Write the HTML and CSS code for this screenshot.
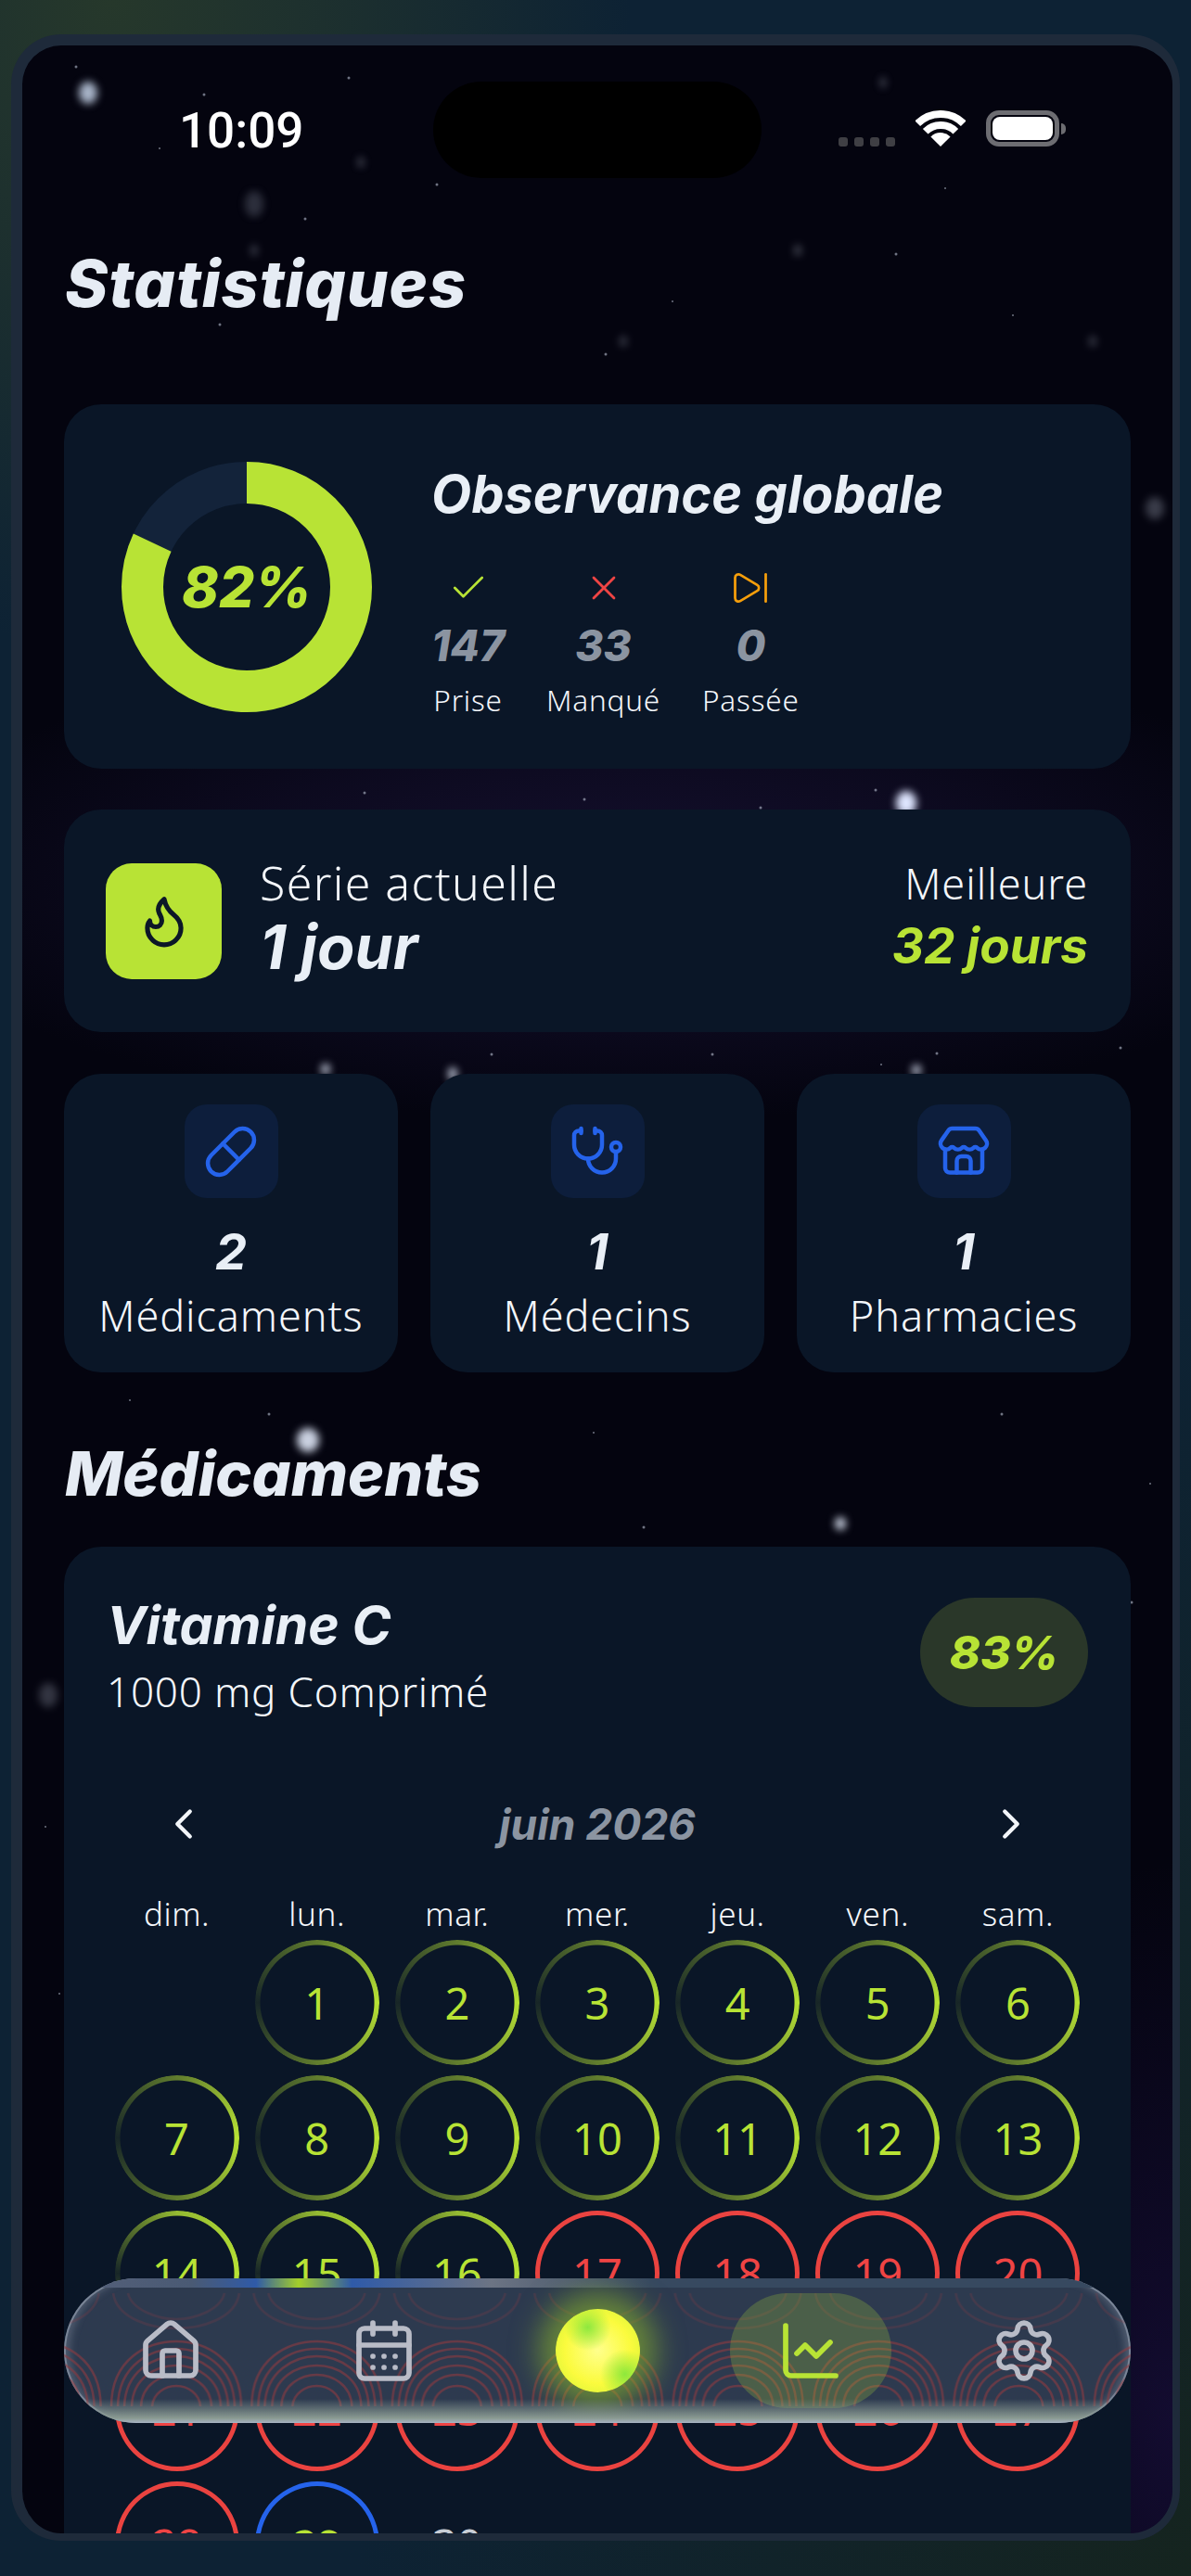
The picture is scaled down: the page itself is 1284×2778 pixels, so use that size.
FILE: index.html
```html
<!DOCTYPE html>
<html lang="fr">
<head>
<meta charset="utf-8">
<title>Statistiques</title>
<link rel="stylesheet" href="styles.css">
</head>
<body>
<div class="phone">
  <svg class="sky" viewBox="24 49 1240 2683" aria-hidden="true">
    <g class="soft">
      <ellipse cx="95" cy="100" rx="10" ry="12" fill="#a8b4c8"/>
      <ellipse cx="977" cy="866" rx="11" ry="13" fill="#dfe6ff"/>
      <ellipse cx="332" cy="1553" rx="12" ry="13" fill="#c9d0e0"/>
      <ellipse cx="906" cy="1643" rx="6" ry="7" fill="#c9d0e0"/>
      <ellipse cx="351" cy="1153" rx="5" ry="6" fill="#b8bfd0"/>
      <ellipse cx="488" cy="1158" rx="5" ry="7" fill="#b8bfd0"/>
      <ellipse cx="988" cy="1154" rx="5" ry="6" fill="#b8bfd0"/>
    </g>
    <g class="soft faint">
      <ellipse cx="952" cy="89" rx="4" ry="6" fill="#8a90a0"/>
      <ellipse cx="389" cy="175" rx="4" ry="6" fill="#8a90a0"/>
      <ellipse cx="274" cy="220" rx="10" ry="14" fill="#6a7080"/>
      <ellipse cx="274" cy="270" rx="4" ry="6" fill="#8a90a0"/>
      <ellipse cx="860" cy="270" rx="4" ry="6" fill="#a0a6b4"/>
      <ellipse cx="672" cy="368" rx="4" ry="6" fill="#8a90a0"/>
      <ellipse cx="1178" cy="368" rx="4" ry="6" fill="#8a90a0"/>
      <ellipse cx="1245" cy="548" rx="10" ry="12" fill="#8a90a0"/>
      <ellipse cx="52" cy="1828" rx="10" ry="13" fill="#7a7f8e"/>
    </g>
    <g class="tiny" fill="#b8bfd0">
      <circle cx="82" cy="72" r="1.5"/><circle cx="376" cy="84" r="1.5"/><circle cx="220" cy="102" r="1.5"/>
      <circle cx="471" cy="199" r="1.5"/><circle cx="329" cy="236" r="1.5"/><circle cx="966" cy="274" r="1.5"/>
      <circle cx="237" cy="350" r="1.5"/><circle cx="653" cy="382" r="1.5"/><circle cx="1019" cy="203" r="1"/>
      <circle cx="725" cy="325" r="1"/><circle cx="1092" cy="340" r="1"/><circle cx="172" cy="160" r="1"/>
      <circle cx="393" cy="855" r="1.5"/><circle cx="630" cy="862" r="1.5"/><circle cx="820" cy="871" r="1.5"/>
      <circle cx="944" cy="852" r="1.5"/><circle cx="530" cy="1137" r="1.5"/><circle cx="768" cy="1137" r="1.5"/>
      <circle cx="1010" cy="1136" r="1.5"/><circle cx="1208" cy="1130" r="1.5"/><circle cx="950" cy="1148" r="1"/>
      <circle cx="140" cy="1510" r="1"/><circle cx="290" cy="1525" r="1.5"/><circle cx="640" cy="1545" r="1"/>
      <circle cx="1080" cy="1525" r="1.5"/><circle cx="694" cy="1647" r="1.5"/><circle cx="1220" cy="1728" r="1.5"/>
      <circle cx="49" cy="1970" r="1"/><circle cx="64" cy="2150" r="1"/><circle cx="1240" cy="1600" r="1"/>
    </g>
  </svg>

  <header class="status">
    <span class="time">10:09</span>
    <span class="island"></span>
    <span class="signal"><i></i><i></i><i></i><i></i></span>
    <svg class="wifi" viewBox="0 0 54 39" aria-hidden="true">
      <path d="M2.25 14.25a35 35 0 0 1 49.5 0" fill="none" stroke="#fff" stroke-width="8"/>
      <path d="M10.7 22.7a23 23 0 0 1 32.6 0" fill="none" stroke="#fff" stroke-width="8"/>
      <path d="M27 39 16.4 28.4a15 15 0 0 1 21.2 0z" fill="#fff"/>
    </svg>
    <span class="battery"><b></b></span>
  </header>

  <main class="content">
    <h1 class="heading page-title">Statistiques</h1>

    <section class="card global">
      <div class="ring">
        <svg viewBox="0 0 270 270" aria-hidden="true">
          <circle class="ring-track" cx="135" cy="135" r="112.5"/>
          <circle class="ring-value" cx="135" cy="135" r="112.5" pathLength="100"/>
        </svg>
        <span class="ring-label">82%</span>
      </div>
      <div class="global-body">
        <h2 class="global-title">Observance globale</h2>
        <div class="stats">
          <div class="stat">
            <svg class="stat-icon lime" viewBox="0 0 24 24"><path d="M20 6 9 17l-5-5"/></svg>
            <strong>147</strong><span>Prise</span>
          </div>
          <div class="stat">
            <svg class="stat-icon red" viewBox="0 0 24 24"><path d="M18 6 6 18"/><path d="m6 6 12 12"/></svg>
            <strong>33</strong><span>Manqué</span>
          </div>
          <div class="stat">
            <svg class="stat-icon orange" viewBox="0 0 24 24"><path d="M21 4v16"/><path d="M6.029 4.285A2 2 0 0 0 3 6v12a2 2 0 0 0 3.029 1.715l9.997-5.998a2 2 0 0 0 .003-3.432z"/></svg>
            <strong>0</strong><span>Passée</span>
          </div>
        </div>
      </div>
    </section>

    <section class="card streak">
      <div class="flame-box">
        <svg viewBox="0 0 24 24" aria-hidden="true"><path d="M8.5 14.5A2.5 2.5 0 0 0 11 12c0-1.38-.5-2-1-3-1.072-2.143-.224-4.054 2-6 .5 2.5 2 4.9 4 6.5 2 1.6 3 3.5 3 5.5a7 7 0 1 1-14 0c0-1.153.433-2.294 1-3a2.5 2.5 0 0 0 2.5 2.5z"/></svg>
      </div>
      <div class="streak-now">
        <span class="streak-label now-label">Série actuelle</span>
        <strong class="streak-value">1 jour</strong>
      </div>
      <div class="streak-best">
        <span class="streak-label">Meilleure</span>
        <strong class="best-value">32 jours</strong>
      </div>
    </section>

    <section class="tiles">
      <div class="card tile">
        <span class="tile-icon"><svg viewBox="0 0 24 24"><path d="m10.5 20.5 10-10a4.95 4.95 0 1 0-7-7l-10 10a4.95 4.95 0 1 0 7 7Z"/><path d="m8.5 8.5 7 7"/></svg></span>
        <strong>2</strong><span class="tile-label">Médicaments</span>
      </div>
      <div class="card tile">
        <span class="tile-icon"><svg viewBox="0 0 24 24"><path d="M11 2v2"/><path d="M5 2v2"/><path d="M5 3H4a2 2 0 0 0-2 2v4a6 6 0 0 0 12 0V5a2 2 0 0 0-2-2h-1"/><path d="M8 15a6 6 0 0 0 12 0v-3"/><circle cx="20" cy="10" r="2"/></svg></span>
        <strong>1</strong><span class="tile-label">Médecins</span>
      </div>
      <div class="card tile">
        <span class="tile-icon"><svg viewBox="0 0 24 24"><path d="M15 21v-5a2 2 0 0 0-2-2h-2a2 2 0 0 0-2 2v5"/><path d="M17.774 10.31a1.12 1.12 0 0 0-1.549 0 2.5 2.5 0 0 1-3.451 0 1.12 1.12 0 0 0-1.548 0 2.5 2.5 0 0 1-3.452 0 1.12 1.12 0 0 0-1.549 0 2.5 2.5 0 0 1-3.77-3.248l2.889-4.184A2 2 0 0 1 7 2h10a2 2 0 0 1 1.653.873l2.895 4.192a2.5 2.5 0 0 1-3.774 3.244"/><path d="M4 10.95V19a2 2 0 0 0 2 2h12a2 2 0 0 0 2-2v-8.05"/></svg></span>
        <strong>1</strong><span class="tile-label">Pharmacies</span>
      </div>
    </section>

    <h2 class="heading section-title">Médicaments</h2>

    <section class="card med">
      <div class="med-head">
        <div>
          <h3 class="med-name">Vitamine C</h3>
          <p class="med-dose">1000 mg Comprimé</p>
        </div>
        <span class="med-badge">83%</span>
      </div>
      <div class="cal-head">
        <svg class="chev" viewBox="0 0 24 24"><path d="m15 18-6-6 6-6"/></svg>
        <span class="cal-title">juin 2026</span>
        <svg class="chev" viewBox="0 0 24 24"><path d="m9 18 6-6-6-6"/></svg>
      </div>
      <div class="cal">
        <span class="dow">dim.</span><span class="dow">lun.</span><span class="dow">mar.</span><span class="dow">mer.</span><span class="dow">jeu.</span><span class="dow">ven.</span><span class="dow">sam.</span>
        <span class="day-empty"></span>
        <span class="day ok">1</span><span class="day ok">2</span><span class="day ok">3</span><span class="day ok">4</span><span class="day ok">5</span><span class="day ok">6</span>
        <span class="day ok">7</span><span class="day ok">8</span><span class="day ok">9</span><span class="day ok">10</span><span class="day ok">11</span><span class="day ok">12</span><span class="day ok">13</span>
        <span class="day ok strong-ring">14</span><span class="day ok strong-ring">15</span><span class="day ok strong-ring">16</span><span class="day miss">17</span><span class="day miss">18</span><span class="day miss">19</span><span class="day miss">20</span>
        <span class="day miss">21</span><span class="day miss">22</span><span class="day miss">23</span><span class="day miss">24</span><span class="day miss">25</span><span class="day miss">26</span><span class="day miss">27</span>
        <span class="day miss">28</span><span class="day today">29</span><span class="day later">30</span>
      </div>
    </section>
  </main>

  <nav class="tabbar">
    <svg class="glass" aria-hidden="true">
      <defs>
        <pattern id="rings" x="45" y="0" width="151.4" height="130" patternUnits="userSpaceOnUse">
          <g fill="none" stroke="#8e3a40" stroke-width="2.5">
            <path d="M6 128C6 76 46 58 76 58s70 18 70 70"/>
            <path d="M13 128C14 82 50 66 76 66s62 16 63 62"/>
            <path d="M20 128C21 90 52 74 76 74s55 16 56 54"/>
            <path d="M28 128C29 96 56 84 76 84s47 12 48 44"/>
            <path d="M38 128C39 104 60 94 76 94s37 10 38 34"/>
            <path d="M50 128C51 114 64 106 76 106s25 8 26 22"/>
            <path d="M8 6C12 34 50 44 76 44s64-10 68-38" opacity=".4"/>
            <path d="M24 6C28 24 56 34 76 34s48-10 52-28" opacity=".4"/>
          </g>
        </pattern>
      </defs>
      <rect class="glass-rings" width="100%" height="100%" fill="url(#rings)"/>
    </svg>
    <a class="tab">
      <svg viewBox="0 0 24 24"><path d="M15 21v-8a1 1 0 0 0-1-1h-4a1 1 0 0 0-1 1v8"/><path d="M3 10a2 2 0 0 1 .709-1.528l7-5.999a2 2 0 0 1 2.582 0l7 5.999A2 2 0 0 1 21 10v9a2 2 0 0 1-2 2H5a2 2 0 0 1-2-2z"/></svg>
    </a>
    <a class="tab">
      <svg viewBox="0 0 24 24"><path d="M8 2v4"/><path d="M16 2v4"/><rect x="3" y="4" width="18" height="18" rx="2"/><path d="M3 10h18"/><path d="M8 14h.01"/><path d="M12 14h.01"/><path d="M16 14h.01"/><path d="M8 18h.01"/><path d="M12 18h.01"/><path d="M16 18h.01"/></svg>
    </a>
    <a class="tab"><span class="orb"></span></a>
    <a class="tab tab-active">
      <span class="tab-pill"><svg viewBox="0 0 24 24"><path d="M3 3v16a2 2 0 0 0 2 2h16"/><path d="m19 9-5 5-4-4-3 3"/></svg></span>
    </a>
    <a class="tab">
      <svg viewBox="0 0 24 24"><path d="M9.671 4.136a2.34 2.34 0 0 1 4.659 0 2.34 2.34 0 0 0 3.319 1.915 2.34 2.34 0 0 1 2.33 4.033 2.34 2.34 0 0 0 0 3.831 2.34 2.34 0 0 1-2.33 4.033 2.34 2.34 0 0 0-3.319 1.915 2.34 2.34 0 0 1-4.659 0 2.34 2.34 0 0 0-3.32-1.915 2.34 2.34 0 0 1-2.33-4.033 2.34 2.34 0 0 0 0-3.831A2.34 2.34 0 0 1 6.35 6.051a2.34 2.34 0 0 0 3.319-1.915"/><circle cx="12" cy="12" r="3"/></svg>
    </a>
  </nav>
</div>
</body>
</html>
```
FILE: styles.css
```css
* { box-sizing: border-box; margin: 0; padding: 0; }
html, body { height: 2778px; overflow: hidden; }
body {
  font-family: "Noto Sans", sans-serif;
  color: #f4f7fb;
  background:
    radial-gradient(ellipse 560px 700px at 120px 0, #26382b 0, rgba(38,56,43,.6) 45%, rgba(38,56,43,0) 100%),
    radial-gradient(ellipse 900px 1400px at 1284px 2778px, #15241f 0, rgba(21,36,31,0) 100%),
    #0d2234;
  padding: 37px 12px 38px 12px;
}
.phone {
  position: relative;
  height: 2703px;
  border: solid #1e2a3a;
  border-width: 12px 8px 8px 12px;
  border-radius: 54px;
  overflow: hidden;
  background:
    radial-gradient(ellipse 800px 260px at 640px 900px, #15102f 0, rgba(21,16,47,.5) 55%, rgba(21,16,47,0) 100%),
    radial-gradient(ellipse 260px 600px at 1240px 2560px, #130c30 0, rgba(19,12,48,0) 100%),
    linear-gradient(#04040f, #04040f);
}
.sky { position: absolute; inset: 0; width: 100%; height: 100%; }
.soft { filter: blur(4px); }
.faint { opacity: .4; }
.tiny { opacity: .6; }

/* status bar */
.status { position: relative; display: flex; align-items: flex-start; height: 143px; padding-left: 169px; }
.time { margin-top: 62px; font: 500 53px/60px Roboto, sans-serif; color: #fff; width: 274px; }
.island { margin-top: 39px; width: 354px; height: 104px; border-radius: 52px; background: #000; }
.signal { display: flex; gap: 7px; margin: 99px 0 0 83px; }
.signal i { width: 10px; height: 10px; border-radius: 3px; background: #3f3f44; }
.wifi { width: 54px; height: 39px; margin: 70px 0 0 22px; }
.battery {
  position: relative;
  width: 79px; height: 39px; margin: 70px 0 0 22px;
  border: 5px solid #6d6d72; border-radius: 14px; padding: 2px;
}
.battery b { display: block; height: 100%; border-radius: 8px; background: #fff; }
.battery::after {
  content: ""; position: absolute; right: -12px; top: 9px;
  width: 5px; height: 12px; border-radius: 0 5px 5px 0; background: #6d6d72;
}

/* content */
.content { position: relative; padding: 0 45px; }
.heading, .global-title, .streak-value, .best-value, .med-name, .med-badge, .cal-title,
.ring-label, .stat strong, .tile strong {
  font-family: Inter, sans-serif;
  font-style: italic;
  font-weight: 700;
  font-feature-settings: "cv11";
}
.heading { font-size: 66px; line-height: 80px; color: #e6ecf4; font-weight: 800; }
.page-title { font-size: 70px; letter-spacing: 1px; margin: 74px 0 90px; height: 80px; padding-left: 1px; }
.card { background: #0a1627; border-radius: 40px; }

.global { display: flex; align-items: flex-start; gap: 64px; padding: 62px; height: 393px; }
.ring { position: relative; width: 270px; height: 270px; flex: none; }
.ring svg { display: block; width: 270px; height: 270px; transform: rotate(-90deg); }
.ring circle { fill: none; stroke-width: 45; }
.ring-track { stroke: #13233a; }
.ring-value { stroke: #b8e335; stroke-dasharray: 82 100; }
.ring-label {
  position: absolute; inset: 0; display: flex; align-items: center; justify-content: center;
  font-size: 60px; font-weight: 800; color: #b8e335;
}
.global-body { display: flex; flex-direction: column; margin-top: 5px; }
.global-title { font-size: 56px; line-height: 60px; color: #e9eff6; margin-bottom: 49px; white-space: nowrap; }
.stats { display: flex; gap: 45px; }
.stat { display: flex; flex-direction: column; align-items: center; }
.stat-icon { width: 44px; height: 44px; fill: none; stroke-width: 1.5; stroke-linecap: round; stroke-linejoin: round; }
.lime { stroke: #b8e335; }
.red { stroke: #ef4444; }
.orange { stroke: #f59e0b; }
.stat strong { font-size: 46px; line-height: 52px; font-weight: 800; color: #8b94a1; margin-top: 14px; }
.stat span { font-size: 31.5px; line-height: 42px; font-weight: 300; margin-top: 12px; letter-spacing: .8px; }

.streak { display: flex; align-items: center; height: 240px; padding: 0 46px 0 45px; margin-top: 44px; }
.flame-box {
  width: 125px; height: 125px; border-radius: 28px; background: #b8e335;
  display: flex; align-items: center; justify-content: center; flex: none;
}
.flame-box svg { width: 62px; height: 62px; fill: none; stroke: #0c1727; stroke-width: 2; stroke-linecap: round; stroke-linejoin: round; }
.streak-now { display: flex; flex-direction: column; gap: 5px; padding-bottom: 5px; margin-left: 41px; flex: 1; }
.streak-best { display: flex; flex-direction: column; gap: 5px; padding-bottom: 5px; align-items: flex-end; }
.streak-label { font-size: 45px; line-height: 56px; font-weight: 300; letter-spacing: 1px; }
.now-label { font-size: 50px; letter-spacing: 1.4px; }
.streak-value { font-size: 66px; line-height: 72px; color: #e9eff6; }
.best-value { font-size: 53px; line-height: 72px; color: #b8e335; margin-top: -2px; }

.tiles { display: grid; grid-template-columns: repeat(3, 1fr); gap: 35px; margin-top: 45px; }
.tile { height: 322px; padding-top: 33px; display: flex; flex-direction: column; align-items: center; }
.tile-icon {
  width: 101px; height: 101px; border-radius: 24px; background: #0d1e3c;
  display: flex; align-items: center; justify-content: center;
}
.tile-icon svg { width: 60px; height: 60px; fill: none; stroke: #2563eb; stroke-width: 1.8; stroke-linecap: round; stroke-linejoin: round; }
.tile strong { font-size: 54px; line-height: 64px; color: #e9eff6; margin-top: 26px; }
.tile-label { font-size: 45px; line-height: 56px; font-weight: 300; margin-top: 9px; letter-spacing: .9px; }

.section-title { margin-top: 69px; height: 80px; padding-left: 1px; }
.med { margin-top: 39px; padding: 55px 46px 0; }
.med-head { display: flex; justify-content: space-between; align-items: flex-start; }
.med-name { font-size: 57px; line-height: 60px; color: #e9eff6; white-space: nowrap; }
.med-dose { font-size: 44px; line-height: 60px; font-weight: 300; margin-top: 11px; letter-spacing: .8px; }
.med-badge {
  width: 181px; height: 118px; border-radius: 59px; background: #2a3729; color: #b8e335;
  font-size: 50px; font-weight: 800; display: flex; align-items: center; justify-content: center;
}
.cal-head { display: flex; align-items: center; justify-content: space-between; margin-top: 86px; padding: 0 56px; height: 54px; }
.chev { width: 54px; height: 54px; fill: none; stroke: #f2f5f9; stroke-width: 1.9; stroke-linecap: round; stroke-linejoin: round; }
.cal-title { font-size: 46px; color: #8b94a1; }
.cal { display: grid; grid-template-columns: repeat(7, 1fr); justify-items: center; row-gap: 11px; margin-top: 47px; }
.dow { font-size: 35px; line-height: 46px; font-weight: 300; letter-spacing: .6px; height: 52px; margin-bottom: -12px; }
.day-empty { height: 135px; }
.day {
  position: relative; width: 134px; height: 135px; border-radius: 50%;
  display: flex; align-items: center; justify-content: center;
  font-size: 47px; font-weight: 400;
}
.ok { color: #b8e335; }
.ok::before {
  content: ""; position: absolute; inset: 0; border-radius: 50%;
  background: conic-gradient(from 270deg, rgba(184,227,53,.08), rgba(184,227,53,.5) 25%, #b8e335 50%, rgba(184,227,53,.5) 75%, rgba(184,227,53,.08));
  -webkit-mask: radial-gradient(closest-side, transparent calc(100% - 6px), #000 calc(100% - 5px));
  mask: radial-gradient(closest-side, transparent calc(100% - 6px), #000 calc(100% - 5px));
}
.strong-ring::before {
  background: conic-gradient(from 270deg, rgba(184,227,53,.08), rgba(184,227,53,.8) 25%, #b8e335 50%, rgba(184,227,53,.8) 75%, rgba(184,227,53,.08));
}
.miss { color: #ef4444; border: 5px solid #ea4340; }
.today { color: #b8e335; font-weight: 700; border: 5px solid #2563eb; }
.later { color: #c9ced6; }

/* tab bar */
.tabbar {
  position: absolute; left: 45px; right: 45px; bottom: 119px; height: 156px;
  display: flex; border-radius: 78px; overflow: hidden;
  background: #2d3a4f;
  box-shadow: inset 0 0 0 2px rgba(190,200,215,.4), inset 6px 0 8px rgba(190,200,215,.25), inset -6px 0 8px rgba(190,200,215,.25);
}
.tabbar::before {
  content: ""; position: absolute; left: 0; right: 0; top: 0; height: 10px;
  background: linear-gradient(90deg, #55607a 0, #4a5a74 12%, #2f5aa8 18%, #a4cf2a 22%, #2f5aa8 27%, #6c7484 40%, #374960 55%, #374960 100%);
}
.tabbar::after {
  content: ""; position: absolute; left: 0; right: 0; bottom: 0; height: 26px;
  background: linear-gradient(rgba(140,155,175,0), #8a9a92 80%, #a8b4c4);
}
.glass { position: absolute; left: 0; top: 10px; width: 100%; height: 130px; }
.glass-rings { opacity: .6; }
.tab { position: relative; flex: 1; display: flex; align-items: center; justify-content: center; }
.tab svg { width: 72px; height: 72px; fill: none; stroke: #b9bcc7; stroke-width: 1.9; stroke-linecap: round; stroke-linejoin: round; }
.tab-pill {
  width: 174px; height: 124px; border-radius: 62px; background: rgba(184,227,53,.22);
  display: flex; align-items: center; justify-content: center;
}
.tab-pill svg { stroke: #b8e335; }
.orb {
  width: 91px; height: 90px; border-radius: 50%;
  background:
    radial-gradient(circle at 38% 22%, rgba(130,230,60,.9) 0, rgba(130,230,60,0) 28%),
    radial-gradient(circle at 82% 78%, rgba(130,230,60,.9) 0, rgba(130,230,60,0) 26%),
    radial-gradient(circle at 50% 50%, #ffff8c 0, #fbfb3e 55%, #d6f436 90%, #b5ec32 100%);
  box-shadow: 0 0 30px 18px rgba(150,195,40,.55);
}
```
